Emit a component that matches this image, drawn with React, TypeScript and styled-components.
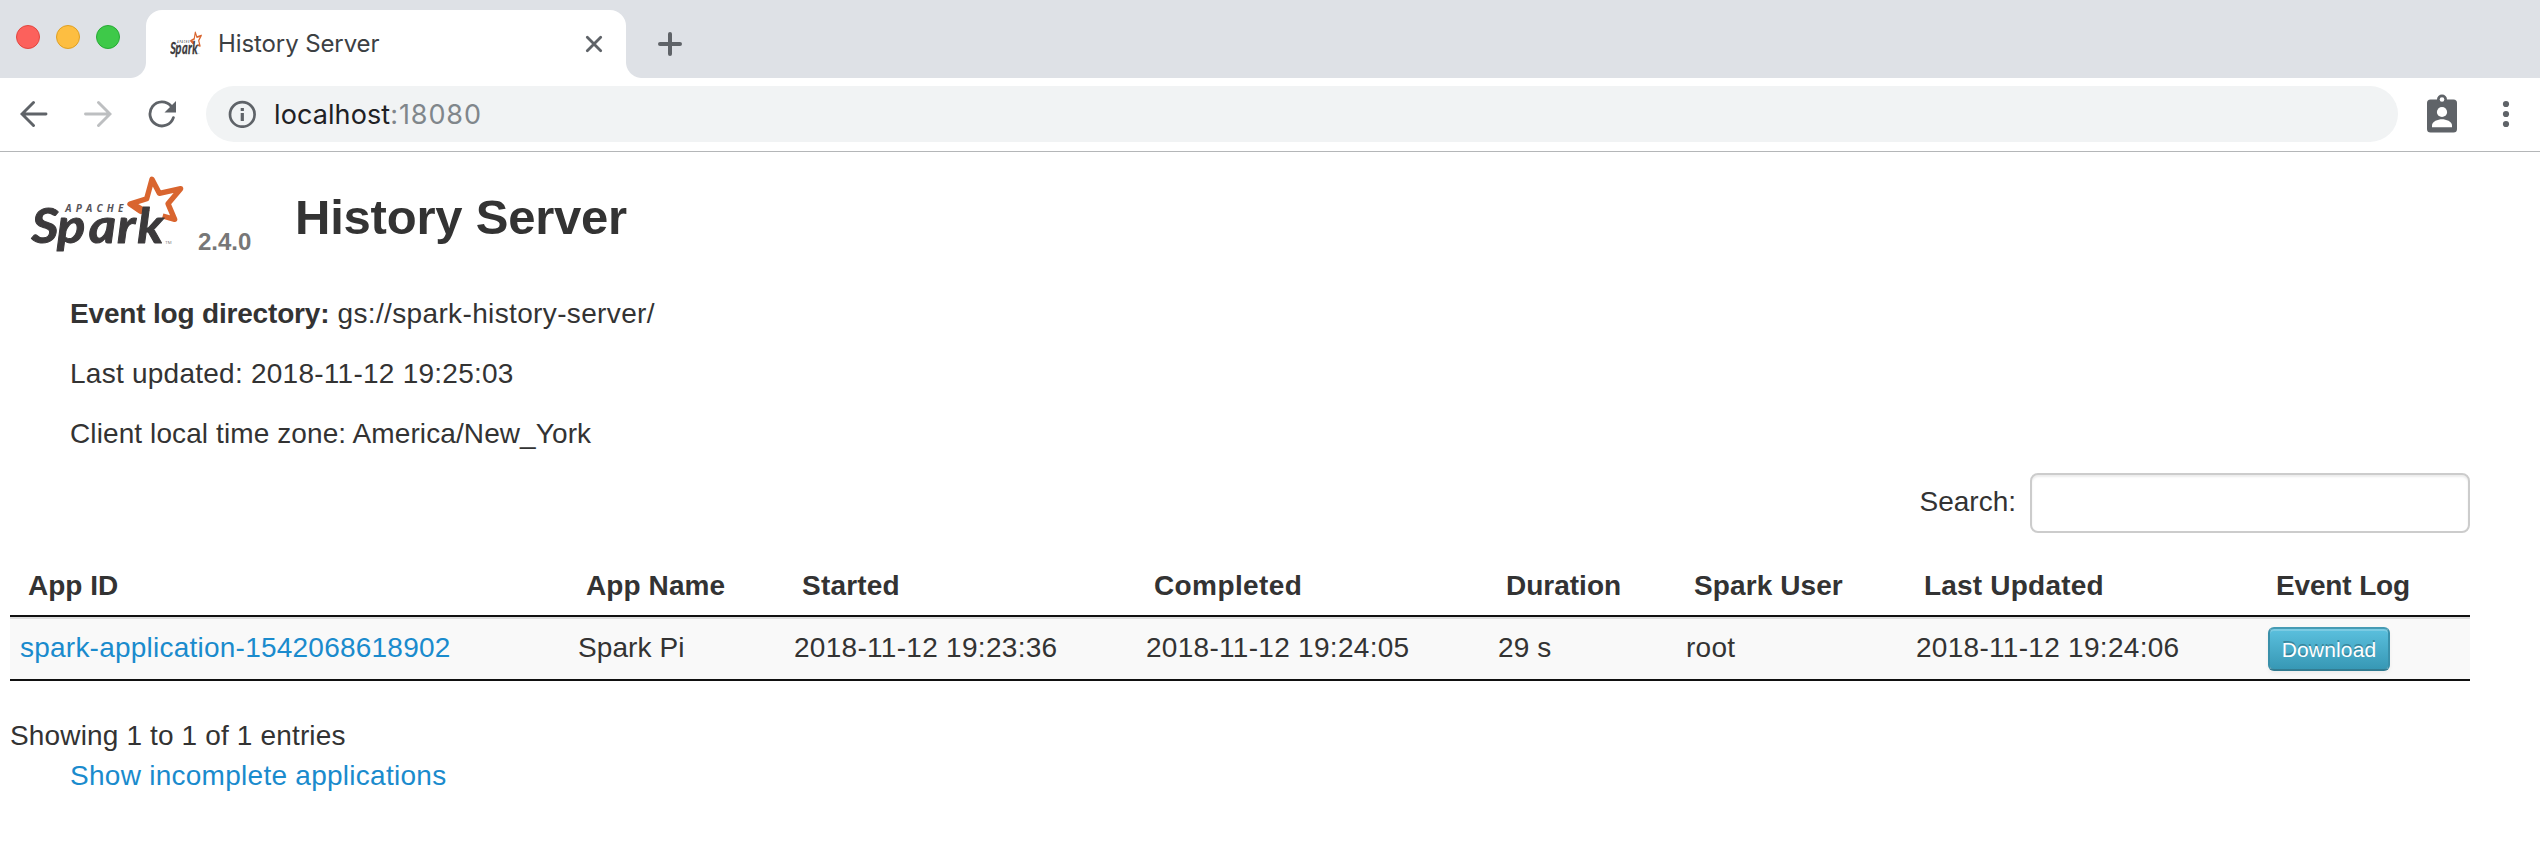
import React from 'react';
import styled, { createGlobalStyle, css } from 'styled-components';

const GlobalStyle = createGlobalStyle`
  *, *::before, *::after { box-sizing: border-box; }
  body {
    margin: 0;
    background: #fff;
    color: #333;
    font: 28px/40px "Liberation Sans", Arial, sans-serif;
  }
`;

/* ---------- browser chrome ---------- */

const TabStrip = styled.div`
  display: flex;
  align-items: flex-start;
  height: 78px;
  background: #dee1e6;
  font-family: Inter, sans-serif;
`;

const WindowControls = styled.div`
  display: flex;
  gap: 16px;
  width: 146px;
  padding: 25px 0 0 16px;
`;

const Light = styled.span<{ $fill: string; $edge: string }>`
  width: 24px;
  height: 24px;
  border-radius: 50%;
  background: ${(p) => p.$fill};
  border: 1px solid ${(p) => p.$edge};
`;

const Tab = styled.div`
  position: relative;
  display: flex;
  align-items: center;
  width: 480px;
  height: 68px;
  margin-top: 10px;
  padding: 0 23px 0 24px;
  border-radius: 16px 16px 0 0;
  background: #fff;

  &::before,
  &::after {
    content: '';
    position: absolute;
    bottom: 0;
    width: 16px;
    height: 16px;
  }
  &::before {
    left: -16px;
    background: radial-gradient(circle at 0 0, transparent 15.5px, #fff 16.5px);
  }
  &::after {
    right: -16px;
    background: radial-gradient(circle at 100% 0, transparent 15.5px, #fff 16.5px);
  }
`;

const TabTitle = styled.span`
  flex: 1;
  margin-left: 16px;
  font-size: 24px;
  line-height: 30px;
  letter-spacing: -0.1px;
  color: #3c4043;
`;

const NewTab = styled.div`
  margin: 32px 0 0 32px;
  line-height: 0;
`;

const Toolbar = styled.div`
  display: flex;
  align-items: center;
  height: 74px;
  padding: 0 28px 2px 20px;
  border-bottom: 1px solid #b4b6b8;
  color: #5f6368;
`;

const NavButtons = styled.div`
  display: flex;
  gap: 36px;
  width: 186px;

  svg:nth-child(2) { color: #bdbfc1; }
`;

const Omnibox = styled.div`
  display: flex;
  align-items: center;
  width: 2192px;
  height: 56px;
  padding-left: 22px;
  border-radius: 28px;
  background: #f1f3f4;
`;

const Url = styled.span`
  margin-left: 18px;
  padding-top: 2px;
  font: 27px/34px Inter, sans-serif;
  letter-spacing: 0.1px;
  color: #202124;
`;

const Port = styled.span`
  letter-spacing: 0.9px;
  color: #80868b;
`;

const ToolbarActions = styled.div`
  display: flex;
  flex: 1;
  align-items: center;
  justify-content: space-between;
  padding-left: 29px;
`;

/* ---------- page ---------- */

const Page = styled.main`
  padding: 18px 70px 0 10px;
`;

const Header = styled.header`
  display: flex;
  align-items: flex-start;
  height: 124px;
  padding-left: 16px;
`;

const Version = styled.span`
  width: 97px;
  margin: 52px 0 0 12px;
  font-size: 24px;
  font-weight: 700;
  color: #777;
`;

const Title = styled.h3`
  margin: 7px 0 0;
  font-size: 49px;
  line-height: 80px;
  letter-spacing: -0.22px;
`;

const spaced = css<{ $ls?: number }>`
  letter-spacing: ${(p) => p.$ls ?? 0}px;
`;

const InfoList = styled.ul`
  margin: 0;
  padding: 0 0 0 60px;
  list-style: none;
`;

const InfoItem = styled.li<{ $ls?: number }>`
  margin-bottom: 20px;
  ${spaced}
`;

const Label = styled.strong`
  letter-spacing: -0.18px;
`;

const SearchRow = styled.label`
  display: flex;
  justify-content: flex-end;
  align-items: center;
  gap: 14px;
  height: 60px;
  margin-top: -1px;

  span { padding-bottom: 2px; }
`;

const SearchInput = styled.input`
  width: 440px;
  height: 60px;
  padding: 8px 12px;
  border: 2px solid #ccc;
  border-radius: 8px;
  background: #fff;
  box-shadow: inset 0 2px 2px rgba(0, 0, 0, 0.075);
  font: inherit;
`;

const Table = styled.table`
  width: 2460px;
  margin-top: 26px;
  table-layout: fixed;
  border-collapse: separate;
  border-spacing: 0;
  border-bottom: 2px solid #111;
`;

const Th = styled.th<{ $w: number; $ls?: number }>`
  width: ${(p) => p.$w}px;
  height: 58px;
  padding: 7px 0 9px 18px;
  border-bottom: 2px solid #111;
  text-align: left;
  vertical-align: top;
  white-space: nowrap;
  ${spaced}
`;

const Td = styled.td<{ $ls?: number }>`
  height: 62px;
  padding: 9px 0 0 10px;
  border-top: 2px solid #ddd;
  background: #f9f9f9;
  vertical-align: top;
  white-space: nowrap;
  ${spaced}
`;

const Link = styled.a`
  color: #1a8bcd;
  text-decoration: none;
`;

const DownloadButton = styled.a`
  display: block;
  width: 122px;
  height: 44px;
  margin-top: -1px;
  border: 2px solid;
  border-color: #459bb4 #3a90aa #327c92;
  border-radius: 6px;
  background: linear-gradient(#5bc0de, #3798b5) padding-box;
  background-color: #3a90aa;
  box-shadow: inset 0 2px 0 rgba(255, 255, 255, 0.2), 0 2px 4px rgba(0, 0, 0, 0.05);
  color: #fff;
  font-size: 21px;
  line-height: 41px;
  letter-spacing: 0.15px;
  text-align: center;
  text-shadow: 0 -2px 0 rgba(0, 0, 0, 0.25);
`;

const TableInfo = styled.div`
  padding-top: 35px;
  letter-spacing: 0.15px;
`;

const Incomplete = styled.div`
  padding-left: 60px;
  letter-spacing: 0.27px;
`;

/* ---------- drawings ---------- */

function SparkLogo({ width, height, viewBox }: { width: number; height: number; viewBox: string }) {
  return (
    <svg width={width} height={height} viewBox={viewBox} preserveAspectRatio="none">
      <path d="M345 125 L312 102 L362 86 L378 28 L400 70 L464 56 L426 101 L446 148 L410 138"
        fill="none" stroke="#d9652f" strokeWidth="16" strokeLinejoin="round" />
      <path d="M304 102 L330 98 L372 122 L344 133 Z" fill="#d9652f" />
      <g transform="scale(1.08 1)">
        <text y="220" x="15 86 174 253 309" fontFamily="Lato, sans-serif" fontStyle="italic" fontWeight="700"
          fontSize="146" fill="#3c3a3c" stroke="#3c3a3c" strokeWidth="3" strokeLinejoin="round">Spark</text>
      </g>
      <text x="118" y="125" fontFamily="Open Sans, sans-serif" fontStyle="italic" fontWeight="700" fontSize="30"
        fill="#56545a" textLength="174">APACHE</text>
      <text x="418" y="222" fontFamily="Open Sans, sans-serif" fontSize="13" fill="#777">TM</text>
    </svg>
  );
}

function ArrowIcon({ flip }: { flip?: boolean }) {
  return (
    <svg width="28" height="28" viewBox="0 0 28 28" fill="none" stroke="currentColor" strokeWidth="2.9" strokeLinecap="round">
      <path d={flip ? 'M1.5 14H25M14.5 2.5L26 14L14.5 25.5' : 'M26 14H2.5M13.5 2.5L2 14L13.5 25.5'} />
    </svg>
  );
}

function ReloadIcon() {
  return (
    <svg width="28" height="28" viewBox="0 0 28 28">
      <path d="M25.4 17.6A12 12 0 1 1 23 6" fill="none" stroke="currentColor" strokeWidth="2.8" strokeLinecap="round" />
      <path d="M28 1V12.5H16.5Z" fill="currentColor" />
    </svg>
  );
}

function InfoIcon() {
  return (
    <svg width="28" height="28" viewBox="0 0 28 28">
      <circle cx="14.3" cy="14.4" r="12.3" fill="none" stroke="currentColor" strokeWidth="2.7" />
      <path d="M12.7 8h3.2v3h-3.2zM12.7 12.9h3.2v8.2h-3.2z" fill="currentColor" />
    </svg>
  );
}

function BadgeIcon() {
  return (
    <svg width="30" height="39" viewBox="0 0 30 39">
      <rect y="5.5" width="30" height="33" rx="3.5" fill="currentColor" />
      <circle cx="15" cy="5.5" r="5" fill="currentColor" />
      <circle cx="15" cy="5.5" r="2.3" fill="#fff" />
      <circle cx="15" cy="18" r="5.1" fill="#fff" />
      <path d="M5 33.3V31.5C5 27.5 11 25.3 15 25.3S25 27.5 25 31.5V33.3Z" fill="#fff" />
    </svg>
  );
}

function MenuIcon() {
  return (
    <svg width="12" height="28" viewBox="0 0 12 28" fill="currentColor">
      <circle cx="6" cy="4" r="3.1" />
      <circle cx="6" cy="14" r="3.1" />
      <circle cx="6" cy="24" r="3.1" />
    </svg>
  );
}

const columns = [
  { name: 'App ID', w: 558, ls: 0 },
  { name: 'App Name', w: 216, ls: 0.1 },
  { name: 'Started', w: 352, ls: 0.2 },
  { name: 'Completed', w: 352, ls: 0.4 },
  { name: 'Duration', w: 188, ls: 0 },
  { name: 'Spark User', w: 230, ls: 0.1 },
  { name: 'Last Updated', w: 352, ls: 0.2 },
  { name: 'Event Log', w: 212, ls: -0.15 },
];

export default function App() {
  return (
    <>
      <GlobalStyle />
      <TabStrip>
        <WindowControls>
          <Light $fill="#fc615c" $edge="#e2463f" />
          <Light $fill="#fdbe41" $edge="#dfa023" />
          <Light $fill="#3ec949" $edge="#27aa35" />
        </WindowControls>
        <Tab>
          <SparkLogo width={32} height={27} viewBox="14 16 460 238" />
          <TabTitle>History Server</TabTitle>
          <svg width="18" height="18" viewBox="0 0 18 18" stroke="#5f6368" strokeWidth="2.8" strokeLinecap="round">
            <path d="M2.3 2.3L15.7 15.7M15.7 2.3L2.3 15.7" />
          </svg>
        </Tab>
        <NewTab>
          <svg width="24" height="24" viewBox="0 0 24 24" stroke="#5f6368" strokeWidth="4" strokeLinecap="round">
            <path d="M12 2V22M2 12H22" />
          </svg>
        </NewTab>
      </TabStrip>
      <Toolbar>
        <NavButtons>
          <ArrowIcon />
          <ArrowIcon flip />
          <ReloadIcon />
        </NavButtons>
        <Omnibox>
          <InfoIcon />
          <Url>localhost<Port>:18080</Port></Url>
        </Omnibox>
        <ToolbarActions>
          <BadgeIcon />
          <MenuIcon />
        </ToolbarActions>
      </Toolbar>

      <Page>
        <Header>
          <SparkLogo width={160} height={90} viewBox="0 0 480 270" />
          <Version>2.4.0</Version>
          <Title>History Server</Title>
        </Header>
        <InfoList>
          <InfoItem $ls={0.36}><Label>Event log directory:</Label> gs://spark-history-server/</InfoItem>
          <InfoItem $ls={0.25}>Last updated: 2018-11-12 19:25:03</InfoItem>
          <InfoItem $ls={0.1}>Client local time zone: America/New_York</InfoItem>
        </InfoList>
        <SearchRow>
          <span>Search:</span>
          <SearchInput type="text" />
        </SearchRow>
        <Table>
          <thead>
            <tr>
              {columns.map((c) => <Th key={c.name} $w={c.w} $ls={c.ls}>{c.name}</Th>)}
            </tr>
          </thead>
          <tbody>
            <tr>
              <Td $ls={0.23}><Link>spark-application-1542068618902</Link></Td>
              <Td $ls={0.1}>Spark Pi</Td>
              <Td $ls={0.29}>2018-11-12 19:23:36</Td>
              <Td $ls={0.29}>2018-11-12 19:24:05</Td>
              <Td $ls={0.1}>29 s</Td>
              <Td $ls={0.3}>root</Td>
              <Td $ls={0.29}>2018-11-12 19:24:06</Td>
              <Td><DownloadButton>Download</DownloadButton></Td>
            </tr>
          </tbody>
        </Table>
        <TableInfo>Showing 1 to 1 of 1 entries</TableInfo>
        <Incomplete><Link>Show incomplete applications</Link></Incomplete>
      </Page>
    </>
  );
}
